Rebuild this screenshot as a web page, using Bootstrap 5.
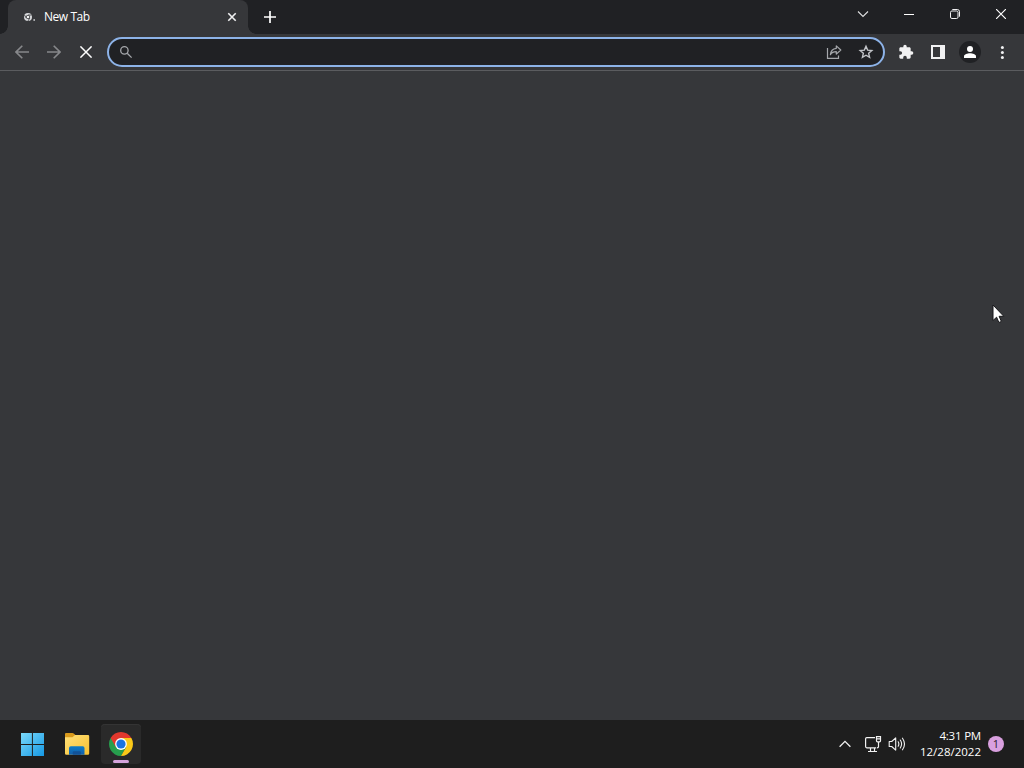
<!DOCTYPE html>
<html lang="en">
<head>
  <meta charset="UTF-8" />
  <meta name="viewport" content="width=device-width, initial-scale=1.0"/>
  <title>New Tab</title>
  <link href="https://cdn.jsdelivr.net/npm/bootstrap@5.3.3/dist/css/bootstrap.min.css" rel="stylesheet">
  <style>
    body {
      background-color: #36373a;
      color: #f1f1f2;
      font-family: "Open Sans", "Noto Sans", sans-serif;
      font-size: 12px;
      height: 100vh;
      overflow: hidden;
    }

    svg {
      display: block;
      flex: none;
    }

    button {
      background: none;
      border: 0;
      padding: 0;
      color: inherit;
      display: flex;
      align-items: center;
      justify-content: center;
      flex: none;
    }

    .tab-strip {
      height: 34px;
      background-color: #202124;
      padding-left: 8px;
    }

    .browser-tab {
      position: relative;
      width: 240px;
      height: 34px;
      background-color: #36373a;
      border-radius: 8px 8px 0 0;
      padding: 0 8px 0 14px;
    }

    /* curved feet of the active tab */
    .browser-tab::before,
    .browser-tab::after {
      content: "";
      position: absolute;
      bottom: 0;
      width: 8px;
      height: 8px;
    }

    .browser-tab::before {
      left: -8px;
      background: radial-gradient(circle at 0 0, transparent 7.5px, #36373a 8px);
    }

    .browser-tab::after {
      right: -8px;
      background: radial-gradient(circle at 100% 0, transparent 7.5px, #36373a 8px);
    }

    .tab-title {
      font-size: 12px;
      letter-spacing: -0.45px;
      margin-left: 8px;
      line-height: 34px;
      color: #fff;
    }

    .tab-close {
      width: 16px;
      height: 16px;
    }

    .new-tab-btn {
      width: 28px;
      height: 34px;
      margin-left: 8px;
    }

    .win-btn {
      width: 46px;
      height: 28px;
    }

    .toolbar {
      height: 37px;
      padding: 0 6px;
      border-bottom: 1px solid #5b5c5f;
    }

    .tool-btn {
      width: 32px;
      height: 32px;
    }

    .dim {
      color: #87888b;
    }

    .omnibox {
      height: 30px;
      margin: 0 5px;
      padding: 0 1px 0 10px;
      background-color: #202124;
      border: 2px solid #8db3e8;
      border-radius: 15px;
      color: #a5a7ab;
    }

    .avatar-disc {
      width: 22px;
      height: 22px;
      background-color: #202124;
    }

    .taskbar {
      height: 48px;
      background-color: #1e1e1e;
      padding: 0 20px 0 12px;
    }

    .task-icons {
      gap: 4.5px;
    }

    .task-btn {
      position: relative;
      width: 40px;
      height: 40px;
      border-radius: 4px;
    }

    .task-btn.running {
      background-color: #2a2a2a;
      box-shadow: inset 0 1px 0 #343434;
    }

    .task-btn.running::after {
      content: "";
      position: absolute;
      left: 12px;
      bottom: 1px;
      width: 16px;
      height: 3px;
      border-radius: 2px;
      background-color: #d5a3dc;
    }

    .tray-network {
      width: 18px;
      margin-left: 13px;
    }

    .tray-volume {
      width: 18px;
      margin-left: 6px;
    }

    .clock {
      width: 75px;
      font-size: 11.5px;
      line-height: 16px;
      color: #fff;
    }

    .clock-time {
      letter-spacing: -0.2px;
    }

    .notify {
      width: 16px;
      height: 16px;
      margin-left: 7px;
      background-color: #d9a0df;
      color: #2a1b2c;
      font-size: 11px;
      line-height: 16px;
    }

    .pointer {
      position: absolute;
      left: 992px;
      top: 304px;
    }
  </style>
</head>
<body class="d-flex flex-column">

  <!-- Tabs and window controls -->
  <div class="tab-strip d-flex">
    <div class="browser-tab d-flex align-items-center">
      <svg width="14" height="14" viewBox="0 0 14 14" fill="none">
        <circle cx="6" cy="7" r="4" fill="#d6d7da"/>
        <path d="M6 5h3.800M4.200 8L2.500 5M7.700 8L6 11" stroke="#36373a" stroke-width=".8"/>
        <circle cx="6" cy="7" r="2.100" fill="#36373a"/>
        <circle cx="6" cy="7" r="1.300" fill="#f1f1f2"/>
        <rect x="11.400" y="9.200" width="1.600" height="1.600" fill="#c8c9cc"/>
      </svg>
      <span class="tab-title">New Tab</span>
      <button class="tab-close ms-auto" aria-label="Close tab">
        <svg width="10" height="10" viewBox="0 0 10 10"><path d="M1.300 1.300l7.400 7.400M8.700 1.300L1.300 8.700" stroke="#f1f1f2" stroke-width="1.600"/></svg>
      </button>
    </div>
    <button class="new-tab-btn" aria-label="Add tab">
      <svg width="12" height="12" viewBox="0 0 12 12"><path d="M6 0v12M0 6h12" stroke="#fff" stroke-width="1.700"/></svg>
    </button>
    <div class="d-flex ms-auto">
      <button class="win-btn" aria-label="Search tabs">
        <svg width="12" height="8" viewBox="0 0 12 8" fill="none"><path d="M1 1.500l5 5 5-5" stroke="#dedfe0" stroke-width="1.100"/></svg>
      </button>
      <button class="win-btn" aria-label="Minimize">
        <svg width="10" height="10" viewBox="0 0 10 10"><path d="M0 5.500h10" stroke="#fff"/></svg>
      </button>
      <button class="win-btn" aria-label="Restore">
        <svg width="10" height="10" viewBox="0 0 10 10" fill="none" stroke="#f1f1f2">
          <rect x=".5" y="2" width="7.500" height="7.500" rx="1.400"/>
          <path d="M2.300.5h5a2.200 2.200 0 0 1 2.200 2.200v5"/>
        </svg>
      </button>
      <button class="win-btn" aria-label="Close">
        <svg width="10" height="10" viewBox="0 0 10 10"><path d="M0 0l10 10M10 0L0 10" stroke="#fff" stroke-width="1.150"/></svg>
      </button>
    </div>
  </div>

  <!-- Toolbar -->
  <div class="toolbar d-flex align-items-center">
    <button class="tool-btn dim" aria-label="Back">
      <svg width="14" height="14" viewBox="0 0 14 14" fill="none" stroke="currentColor" stroke-width="1.600"><path d="M14 7H1.200M7.300.7L1 7l6.300 6.300"/></svg>
    </button>
    <button class="tool-btn dim" aria-label="Forward">
      <svg width="14" height="14" viewBox="0 0 14 14" fill="none" stroke="currentColor" stroke-width="1.600"><path d="M0 7h12.800M6.700.7L13 7l-6.300 6.300"/></svg>
    </button>
    <button class="tool-btn" aria-label="Stop">
      <svg width="12" height="12" viewBox="0 0 12 12" stroke="#fff" stroke-width="1.500"><path d="M.4.4l11.200 11.200M11.600.4L.4 11.600"/></svg>
    </button>

    <div class="omnibox d-flex align-items-center flex-grow-1">
      <svg width="14" height="14" viewBox="0 0 14 14" fill="none" stroke="currentColor" stroke-width="1.300">
        <circle cx="5.400" cy="5.400" r="3.700"/>
        <path d="M8.200 8.200l4.400 4.400"/>
      </svg>
      <button class="tool-btn ms-auto" aria-label="Share">
        <svg width="16" height="16" viewBox="0 0 16 16" fill="none" stroke="currentColor" stroke-width="1.200">
          <path d="M1.500 4v10.400h11V11.600"/>
          <path d="M10.300 1.900l4.500 4.100-4.500 4.100V7.700c-2.800 0-4.700.9-5.900 3 .3-3.600 2.500-6 5.900-6.400z" stroke-linejoin="round"/>
        </svg>
      </button>
      <button class="tool-btn" aria-label="Bookmark">
        <svg width="16" height="16" viewBox="0 0 16 16" fill="none" stroke="#c3c5c9" stroke-width="1.400">
          <path d="M8 2.200l1.650 3.900 4.200.4-3.200 2.800.95 4.100L8 11.200l-3.600 2.200.95-4.100-3.200-2.800 4.200-.4z"/>
        </svg>
      </button>
    </div>

    <button class="tool-btn" aria-label="Extensions">
      <svg width="16" height="16" viewBox="0 0 24 24" fill="#f1f1f2"><path d="M20.500 11H19V7c0-1.100-.9-2-2-2h-4V3.500a2.500 2.500 0 0 0-5 0V5H4c-1.100 0-2 .9-2 2v3.800h1.500a2.700 2.700 0 0 1 0 5.400H2V20c0 1.100.9 2 2 2h3.800v-1.500a2.700 2.700 0 0 1 5.400 0V22H17c1.100 0 2-.9 2-2v-4h1.500a2.500 2.500 0 0 0 0-5z"/></svg>
    </button>
    <button class="tool-btn" aria-label="Side panel">
      <svg width="14" height="14" viewBox="0 0 14 14" fill="none"><rect x="1" y="1" width="12" height="12" stroke="#f1f1f2" stroke-width="2"/><path d="M9 1h4v12H9z" fill="#f1f1f2"/></svg>
    </button>
    <button class="tool-btn" aria-label="Profile">
      <span class="avatar-disc rounded-circle d-flex align-items-center justify-content-center">
        <svg width="12" height="12" viewBox="0 0 12 12" fill="#fff"><circle cx="6" cy="3" r="3"/><path d="M0 12v-1.600C0 8.300 3.500 7.300 6 7.300s6 1 6 3.100V12z"/></svg>
      </span>
    </button>
    <button class="tool-btn" aria-label="Menu">
      <svg width="4" height="14" viewBox="0 0 4 14" fill="#f1f1f2"><circle cx="2.400" cy="2.400" r="1.500"/><circle cx="2.400" cy="7.400" r="1.500"/><circle cx="2.400" cy="12.400" r="1.500"/></svg>
    </button>
  </div>

  <!-- Page is still loading -->
  <main class="flex-grow-1"></main>

  <!-- Taskbar -->
  <div class="taskbar d-flex align-items-center">
    <div class="task-icons d-flex">
      <button class="task-btn" aria-label="Start">
        <svg width="24" height="24" viewBox="0 0 24 24">
          <defs>
            <linearGradient id="win" x1="0" y1="0" x2="24" y2="24" gradientUnits="userSpaceOnUse">
              <stop offset="0" stop-color="#7fdcfb"/>
              <stop offset="1" stop-color="#1598e4"/>
            </linearGradient>
          </defs>
          <path d="M1 1h10.900v10.900H1zM12.900 1H24v10.900H12.900zM1 12.900h10.900V24H1zM12.900 12.900H24V24H12.900z" fill="url(#win)"/>
        </svg>
      </button>
      <button class="task-btn" aria-label="File Explorer">
        <svg width="26" height="24" viewBox="0 0 26 24">
          <defs>
            <linearGradient id="folder" x1="0" y1="0" x2="1" y2="1">
              <stop offset="0" stop-color="#ffe07a"/>
              <stop offset="1" stop-color="#f8c130"/>
            </linearGradient>
            <linearGradient id="pocket" x1="0" y1="0" x2="0" y2="1">
              <stop offset="0" stop-color="#0c7cc8"/>
              <stop offset="1" stop-color="#135fa9"/>
            </linearGradient>
          </defs>
          <path d="M2 1h6.500q.7 0 1.200.5L12 3.500V8H1V2q0-1 1-1z" fill="#d99a1c"/>
          <path d="M1 5.200h7.500L11 3h13q1.200 0 1.200 1.200v17.300q0 1.200-1.200 1.200H2.200Q1 22.700 1 21.500z" fill="url(#folder)"/>
          <path d="M5 22.700v-6.700q0-1.800 1.800-1.800h11.900q1.800 0 1.800 1.800v6.700z" fill="url(#pocket)"/>
          <path d="M8.800 22.700v-2.400q0-1 1-1h6q1 0 1 1v2.400z" fill="#125297"/>
        </svg>
      </button>
      <button class="task-btn running" aria-label="Google Chrome">
        <svg width="24" height="24" viewBox="0 0 24 24">
          <path d="M1.610 6A12 12 0 0 0 12 24l5.200-9L12 12z" fill="#279e4d"/>
          <path d="M12 12V6h10.390A12 12 0 0 1 12 24l5.200-9z" fill="#fbc918"/>
          <path d="M1.610 6L6.800 15 12 6h10.390A12 12 0 0 0 1.610 6z" fill="#e2382d"/>
          <circle cx="12" cy="12" r="5.900" fill="#fff"/>
          <circle cx="12" cy="12" r="4.600" fill="#1b73e0"/>
        </svg>
      </button>
    </div>

    <div class="d-flex align-items-center ms-auto">
      <button aria-label="Hidden icons">
        <svg width="12" height="8" viewBox="0 0 12 8" fill="none"><path d="M.6 6.800L6 1.400l5.400 5.400" stroke="#f1f1f1" stroke-width="1.300"/></svg>
      </button>
      <button class="tray-network" aria-label="Network">
        <svg width="18" height="18" viewBox="0 0 18 18" fill="none" stroke="#f1f1f1" stroke-width="1.200">
          <path d="M11 2.600H2.800q-1.200 0-1.200 1.200v7.800q0 1.200 1.200 1.200h9.400M6.500 12.800v3.400M10.500 12.800v3.400M4 16.500h9"/>
          <path d="M12.500 1.600h4v4.200q0 1-1 1h-2q-1 0-1-1zM12.500 3.800h4M14.500 6.800v5q0 1-1.500 1"/>
        </svg>
      </button>
      <button class="tray-volume" aria-label="Volume">
        <svg width="18" height="16" viewBox="0 0 18 16" fill="none" stroke="#f1f1f1" stroke-width="1.100" stroke-linejoin="round" stroke-linecap="round">
          <path d="M1.200 5.500h2.500l4-3.600v12.200l-4-3.600H1.200z"/>
          <path d="M10.200 5.800q1.300 2.200 0 4.400M12.300 4q2.600 4 0 8M14.500 2.200q4 5.800 0 11.600"/>
        </svg>
      </button>
      <div class="clock text-end">
        <div class="clock-time">4:31 PM</div>
        <div>12/28/2022</div>
      </div>
      <span class="notify rounded-circle text-center">1</span>
    </div>
  </div>

  <svg class="pointer" width="13" height="20" viewBox="0 0 13 20"><path d="M1 1v15.500l3.600-3.300 2.300 5.300 2.500-1.100-2.300-5.100h4.700z" fill="#fff" stroke="#17171a" stroke-width="1"/></svg>

  <script src="https://cdn.jsdelivr.net/npm/bootstrap@5.3.3/dist/js/bootstrap.bundle.min.js"></script>
</body>
</html>
